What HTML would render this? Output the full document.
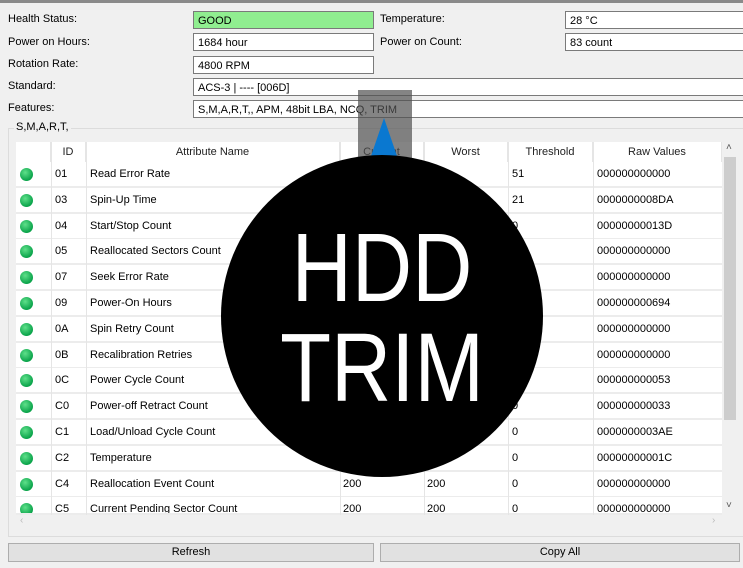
<!DOCTYPE html>
<html><head><meta charset="utf-8"><style>
*{box-sizing:border-box;margin:0;padding:0}
body{width:743px;height:568px;background:#f0f0f0;font-family:"Liberation Sans",sans-serif;font-size:11px;color:#000;position:relative;overflow:hidden}
.a{position:absolute}
.lbl{position:absolute;left:8px}
.box{position:absolute;background:#fff;border:1px solid #7a7a7a;height:18px;padding-left:4px;line-height:18px}
.hd{position:absolute;top:142px;height:20px;line-height:20px;text-align:center;background:#fff;border-right:1px solid #e5e5e5;color:#222}
.row{position:absolute;left:16px;width:706px;height:26px;background:#fff;border-bottom:2px solid #ececec}
.row span{position:absolute;top:0;line-height:25px}
.dot{position:absolute;left:4px;top:6px;width:13px;height:13px;border-radius:50%;background:radial-gradient(circle at 40% 35%,#5fe08a,#0aa34a 70%)}
.vl{position:absolute;top:142px;width:1px;height:373px;background:#e5e5e5}
.btn{position:absolute;top:543px;height:19px;background:#e1e1e1;border:1px solid #adadad;text-align:center;line-height:17px}
</style></head><body>
<div class="a" style="left:0;top:0;width:743px;height:3px;background:#8a8a8a"></div>
<div class="lbl" style="top:13px">Health Status:</div>
<div class="lbl" style="top:36px">Power on Hours:</div>
<div class="lbl" style="top:58px">Rotation Rate:</div>
<div class="lbl" style="top:80px">Standard:</div>
<div class="lbl" style="top:102px">Features:</div>
<div class="box" style="left:193px;top:11px;width:181px;background:#90ee90">GOOD</div>
<div class="box" style="left:193px;top:33px;width:181px">1684 hour</div>
<div class="box" style="left:193px;top:56px;width:181px">4800 RPM</div>
<div class="a" style="left:380px;top:13px">Temperature:</div>
<div class="a" style="left:380px;top:36px">Power on Count:</div>
<div class="box" style="left:565px;top:11px;width:180px">28 °C</div>
<div class="box" style="left:565px;top:33px;width:180px">83 count</div>
<div class="box" style="left:193px;top:78px;width:552px">ACS-3 | ---- [006D]</div>
<div class="box" style="left:193px;top:100px;width:552px">S,M,A,R,T,, APM, 48bit LBA, NCQ, TRIM</div>
<div class="a" style="left:8px;top:128px;width:740px;height:409px;border:1px solid #dcdcdc"></div>
<div class="a" style="left:14px;top:121px;background:#f0f0f0;padding:0 2px">S,M,A,R,T,</div>
<div class="a" style="left:16px;top:142px;width:722px;height:389px;background:#fff"></div>
<div class="hd" style="left:16px;width:35px"></div>
<div class="hd" style="left:51px;width:35px">ID</div>
<div class="hd" style="left:86px;width:254px">Attribute Name</div>
<div class="hd" style="left:340px;width:84px">Current</div>
<div class="hd" style="left:424px;width:84px">Worst</div>
<div class="hd" style="left:508px;width:85px">Threshold</div>
<div class="hd" style="left:593px;width:129px">Raw Values</div>
<div id="rows"></div>
<div class="vl" style="left:51px"></div><div class="vl" style="left:86px"></div><div class="vl" style="left:340px"></div><div class="vl" style="left:424px"></div><div class="vl" style="left:508px"></div><div class="vl" style="left:593px"></div>
<div class="a" style="left:16px;top:515px;width:722px;height:16px;background:#f0f0f0"></div>
<div class="a" style="left:722px;top:142px;width:16px;height:373px;background:#f0f0f0"></div>
<div class="a" style="left:724px;top:157px;width:12px;height:263px;background:#cdcdcd"></div>
<div class="a" style="left:726px;top:142px;font-size:10px;color:#555">˄</div>
<div class="a" style="left:726px;top:500px;font-size:10px;color:#555">˅</div>
<div class="a" style="left:20px;top:515px;font-size:10px;color:#bbb">‹</div>
<div class="a" style="left:712px;top:515px;font-size:10px;color:#bbb">›</div>
<div class="btn" style="left:8px;width:366px">Refresh</div>
<div class="btn" style="left:380px;width:360px">Copy All</div>
<div class="a" style="left:358px;top:90px;width:54px;height:80px;background:rgba(80,80,80,0.7)"></div>
<svg class="a" style="left:0;top:0" width="743" height="568"><polygon points="384,118 371,156 397,156" fill="#0a78d0"/><circle cx="382" cy="316" r="161" fill="#000"/></svg>
<div class="a" style="left:222px;top:219px;width:320px;text-align:center;color:#fff;font-size:97px;line-height:97px;transform:scaleX(0.86)">HDD</div>
<div class="a" style="left:222px;top:319px;width:320px;text-align:center;color:#fff;font-size:97px;line-height:97px;transform:scaleX(0.86)">TRIM</div>
<script>
var d=[["01","Read Error Rate","","","51","000000000000"],["03","Spin-Up Time","","","21","0000000008DA"],["04","Start/Stop Count","","","0","00000000013D"],["05","Reallocated Sectors Count","","","","000000000000"],["07","Seek Error Rate","","","","000000000000"],["09","Power-On Hours","","","","000000000694"],["0A","Spin Retry Count","","","","000000000000"],["0B","Recalibration Retries","","","","000000000000"],["0C","Power Cycle Count","","","","000000000053"],["C0","Power-off Retract Count","","","0","000000000033"],["C1","Load/Unload Cycle Count","","","0","0000000003AE"],["C2","Temperature","","","0","00000000001C"],["C4","Reallocation Event Count","200","200","0","000000000000"],["C5","Current Pending Sector Count","200","200","0","000000000000"]];
var h="";d.forEach(function(r,i){var t=162+i*25.8;var hh=i==13?Math.min(26,515-t):26;h+='<div class="row" style="top:'+t+'px;height:'+hh+'px;overflow:hidden"><div class="dot"></div><span style="left:39px">'+r[0]+'</span><span style="left:74px">'+r[1]+'</span><span style="left:327px">'+r[2]+'</span><span style="left:411px">'+r[3]+'</span><span style="left:496px">'+r[4]+'</span><span style="left:581px">'+r[5]+'</span></div>';});
document.getElementById("rows").outerHTML=h;
</script>
</body></html>
